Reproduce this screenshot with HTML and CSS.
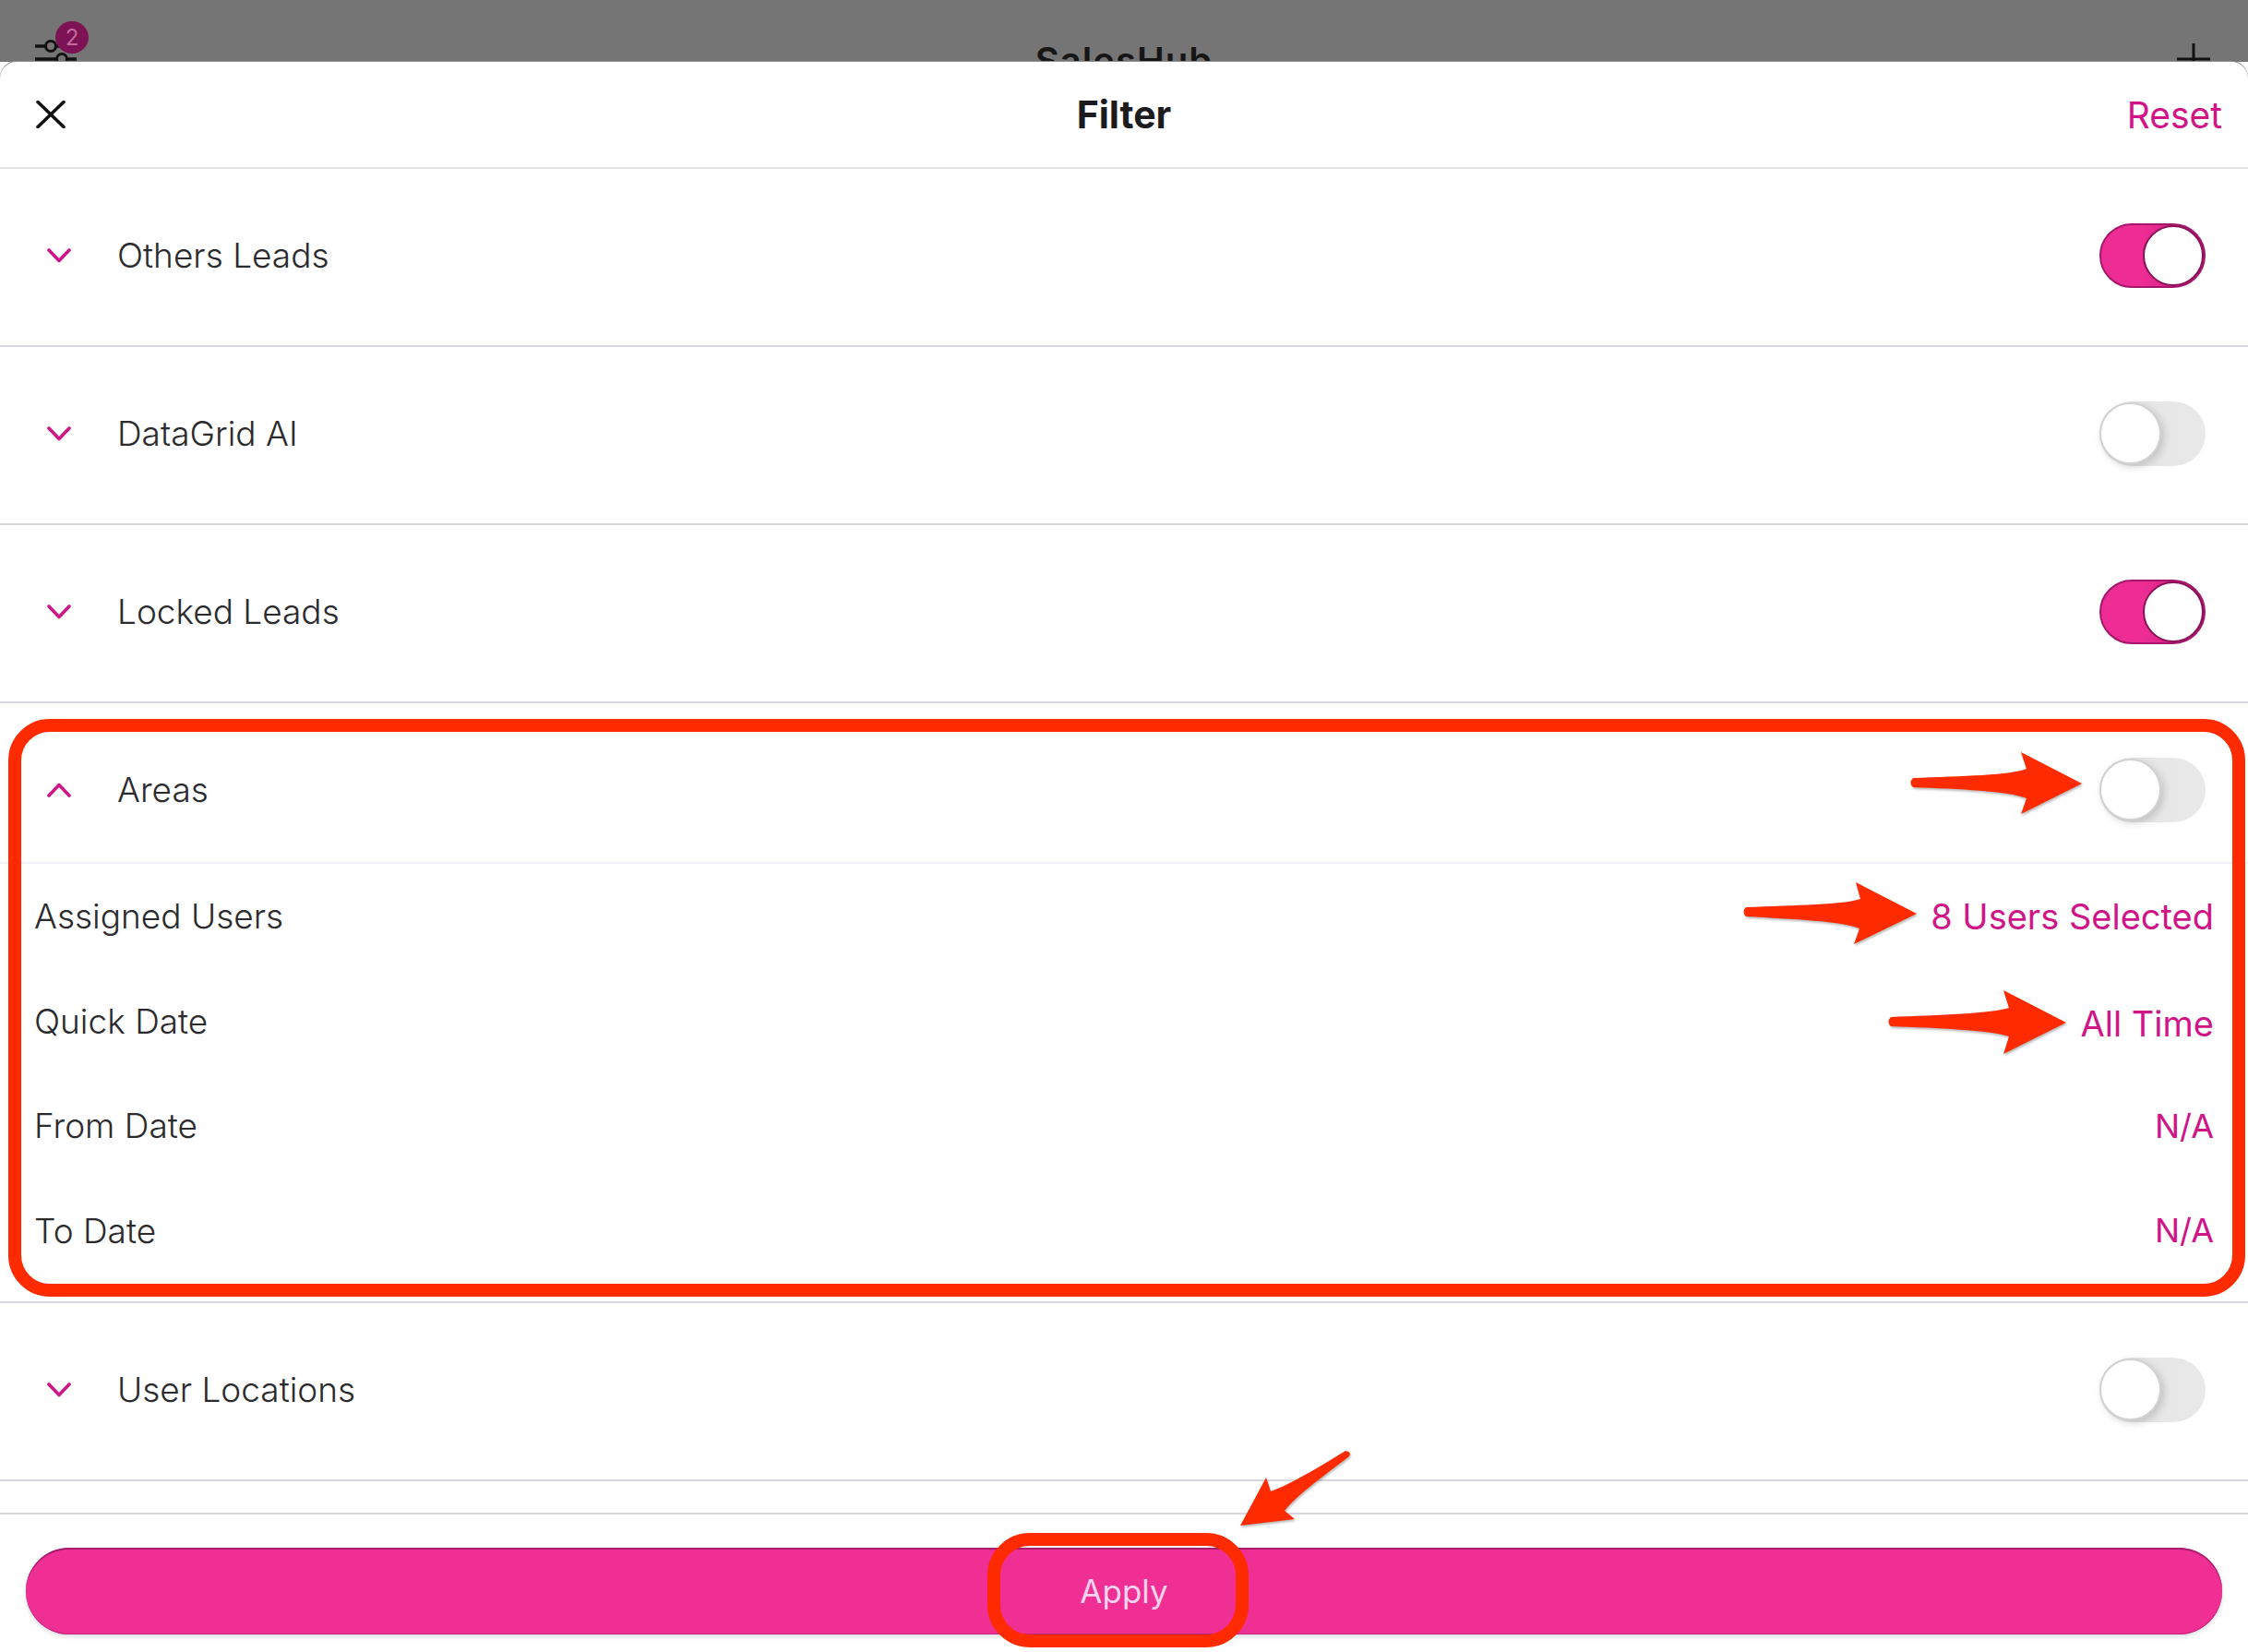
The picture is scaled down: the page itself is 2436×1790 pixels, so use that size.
FILE: index.html
```html
<!DOCTYPE html>
<html lang="en">
<head>
  <meta charset="UTF-8">
  <title>SalesHub Filter</title>
  <link rel="stylesheet" href="styles.css">
</head>
<body>

<svg class="defs" width="0" height="0">
  <symbol id="chevDown" viewBox="0 0 26 16">
    <path d="M2 2 L13 13.5 L24 2" fill="none" stroke="currentColor" stroke-width="3.6" stroke-linecap="round" stroke-linejoin="round"/>
  </symbol>
  <symbol id="chevUp" viewBox="0 0 26 16">
    <path d="M2 14 L13 2.5 L24 14" fill="none" stroke="currentColor" stroke-width="3.6" stroke-linecap="round" stroke-linejoin="round"/>
  </symbol>
</svg>

<div class="screen">
  <div class="topbar">
    <div class="filter-btn">
      <svg class="sliders" viewBox="0 0 48 40" width="48" height="40">
        <path d="M1 13 H12 M24 13 H46 M1 27 H24 M36 27 H46" fill="none" stroke="#111" stroke-width="3.5"/>
        <circle cx="18" cy="13" r="5.5" fill="none" stroke="#111" stroke-width="3"/>
        <circle cx="30" cy="27" r="5.5" fill="none" stroke="#111" stroke-width="3"/>
      </svg>
      <span class="badge">2</span>
    </div>
    <div class="app-title">SalesHub</div>
    <svg class="plus" viewBox="0 0 36 36" width="36" height="36">
      <path d="M18 0 V36 M0 17 H36" stroke="#111" stroke-width="3"/>
    </svg>
  </div>

  <div class="sheet">
    <div class="sheet-head">
      <svg class="close" viewBox="0 0 32 30" width="32" height="30">
        <path d="M2 1.500 L30 28.500 M30 1.500 L2 28.500" stroke="#111" stroke-width="3.600" stroke-linecap="round"/>
      </svg>
      <h1>Filter</h1>
      <a class="reset" href="#">Reset</a>
    </div>

    <div class="row">
      <svg class="chev"><use href="#chevDown"/></svg>
      <span class="row-label">Others Leads</span>
      <span class="toggle on"></span>
    </div>
    <div class="row">
      <svg class="chev"><use href="#chevDown"/></svg>
      <span class="row-label">DataGrid AI</span>
      <span class="toggle"></span>
    </div>
    <div class="row">
      <svg class="chev"><use href="#chevDown"/></svg>
      <span class="row-label">Locked Leads</span>
      <span class="toggle on"></span>
    </div>

    <div class="areas">
      <div class="areas-head">
        <svg class="chev"><use href="#chevUp"/></svg>
        <span class="row-label">Areas</span>
        <span class="toggle"></span>
      </div>
      <div class="sub-row"><span>Assigned Users</span><span class="value">8 Users Selected</span></div>
      <div class="sub-row"><span>Quick Date</span><span class="value low">All Time</span></div>
      <div class="sub-row"><span>From Date</span><span class="value na">N/A</span></div>
      <div class="sub-row"><span>To Date</span><span class="value na">N/A</span></div>
      <div class="frame-areas"></div>
    </div>

    <div class="row">
      <svg class="chev"><use href="#chevDown"/></svg>
      <span class="row-label">User Locations</span>
      <span class="toggle"></span>
    </div>
    <div class="row-peek"></div>

    <div class="footer">
      <button class="apply">Apply<span class="frame-apply"></span></button>
    </div>
  </div>

  <!-- callout arrows drawn on top of the screenshot -->
  <svg class="marks" viewBox="0 0 2436 1790" width="2436" height="1790">
    <path d="M2073 843 C2125 841 2180 840 2196 833 L2190 815 L2256 849 L2190 882 L2196 865 C2175 857 2125 855 2073 853 Q2068 848 2073 843 Z"/>
    <path d="M1892 983 C1945 981 2000 980 2016 974 L2011 956 L2077 990 L2009 1023 L2015 1006 C1995 998 1945 996 1892 993 Q1887 988 1892 983 Z"/>
    <path d="M2049 1102 C2100 1100 2160 1098 2177 1092 L2171 1073 L2239 1108 L2171 1142 L2177 1123 C2155 1116 2100 1114 2049 1112 Q2044 1107 2049 1102 Z"/>
    <path d="M1458 1572 C1440 1583 1400 1608 1377 1616 L1372 1601 L1344 1653 L1403 1646 L1392 1637 C1405 1620 1440 1595 1462 1578 Q1465 1573 1458 1572 Z"/>
  </svg>
</div>

</body>
</html>
```

FILE: styles.css
```css
html, body {
  margin: 0;
  padding: 0;
}
body {
  font-family: Inter, "Liberation Sans", sans-serif;
  color: #2b2b2e;
  background: #fff;
}
.defs {
  display: block;
  height: 0;
}
.screen {
  position: relative;
  width: 2436px;
  height: 1790px;
  overflow: hidden;
  background: #fff;
}

/* dimmed app bar behind the sheet */
.topbar {
  height: 67px;
  background: #757575;
  overflow: hidden;
  display: flex;
  justify-content: space-between;
  padding: 0 41px 0 37px;
}
.filter-btn {
  position: relative;
  width: 48px;
}
.sliders {
  display: block;
  margin-top: 37px;
}
.badge {
  position: absolute;
  left: 23px;
  top: 23px;
  width: 36px;
  height: 35px;
  border-radius: 50%;
  background: #7d1254;
  color: #c56a9f;
  font-size: 24px;
  line-height: 35px;
  text-align: center;
}
.app-title {
  font-size: 40px;
  font-weight: 600;
  color: #161616;
  padding-top: 41px;
  margin-right: 8px;
  letter-spacing: 1px;
}
.plus {
  margin-top: 47px;
}

.sheet {
  background: #fff;
  position: relative;
  margin-top: 0;
  border-radius: 18px 18px 0 0;
  box-shadow: 0 -1px 0 #8d8d8d;
}
.sheet-head {
  height: 114px;
  border-bottom: 2px solid #e2e0e6;
  display: flex;
  align-items: center;
  justify-content: space-between;
  padding: 0 28px 0 39px;
  position: relative;
}
.sheet-head h1 {
  position: absolute;
  left: 0;
  right: 0;
  margin: 0;
  text-align: center;
  font-size: 41px;
  font-weight: 700;
  color: #1c1c1e;
  pointer-events: none;
}
.reset {
  color: #cf1587;
  font-size: 39px;
  text-decoration: none;
}

.row {
  height: 188px;
  padding: 0 46px 3px 51px;
  border-bottom: 2px solid #d9d6df;
  display: flex;
  align-items: center;
}
.chev {
  width: 26px;
  height: 16px;
  color: #cf1587;
  flex: none;
}
.row-label {
  flex: 1;
  margin-left: 50px;
  padding-bottom: 2px;
  font-size: 37px;
  font-weight: 300;
}

.toggle {
  position: relative;
  width: 115px;
  height: 70px;
  box-sizing: border-box;
  border-radius: 35px;
  background: linear-gradient(90deg, #e4e4e4, #e9e9ea);
  flex: none;
}
.toggle::after {
  content: "";
  position: absolute;
  left: 0;
  top: 1px;
  width: 67px;
  height: 67px;
  box-sizing: border-box;
  border-radius: 50%;
  background: #fff;
  border: 2px solid #d2d2d2;
  box-shadow: 3px 3px 8px rgba(0, 0, 0, 0.16);
}
.toggle.on {
  background: linear-gradient(90deg, #ee2d94 40%, #cf2280 80%);
  border: 2px solid #a5176b;
}
.toggle.on::after {
  left: 45px;
  top: 0;
  width: 66px;
  height: 66px;
  border-color: #8a1158;
  box-shadow: none;
}

.areas {
  position: relative;
  border-bottom: 2px solid #d9d6df;
  padding-bottom: 20px;
}
.areas-head {
  height: 156px;
  padding: 16px 46px 0 51px;
  border-bottom: 2px solid #f0f0f6;
  display: flex;
  align-items: center;
}
.sub-row {
  height: 113.500px;
  display: flex;
  align-items: center;
  justify-content: space-between;
  padding: 0 37px;
  font-size: 37px;
  font-weight: 300;
}
.value {
  color: #cf1587;
  font-size: 38px;
  font-weight: 400;
}
.value.low {
  padding-top: 6px;
}
.value.na {
  font-size: 36px;
}
.frame-areas {
  position: absolute;
  left: 9px;
  right: 3px;
  top: 17px;
  height: 626px;
  box-sizing: border-box;
  border: 14px solid #ff2b00;
  border-radius: 45px;
}

.row-peek {
  height: 34px;
  border-bottom: 2px solid #d9d6df;
}
.footer {
  padding: 36px 28px 0;
}
.apply {
  position: relative;
  display: block;
  width: 100%;
  height: 94px;
  padding: 0;
  border: none;
  border-radius: 47px;
  background: #ef2f94;
  box-shadow: inset 0 2px 0 #a81c6e, inset 0 -1px 0 #c2237c, 0 2px 5px rgba(0, 0, 0, 0.15);
  color: #fbd3ee;
  font-family: inherit;
  font-size: 35px;
}
.frame-apply {
  position: absolute;
  left: 1042px;
  top: -16px;
  width: 283px;
  height: 124px;
  box-sizing: border-box;
  border: 14px solid #ff2b00;
  border-radius: 46px;
}

.marks {
  position: absolute;
  left: 0;
  top: 0;
  pointer-events: none;
  fill: #ff2b00;
  filter: drop-shadow(1px 2px 1px rgba(60, 60, 60, 0.35));
}
```
